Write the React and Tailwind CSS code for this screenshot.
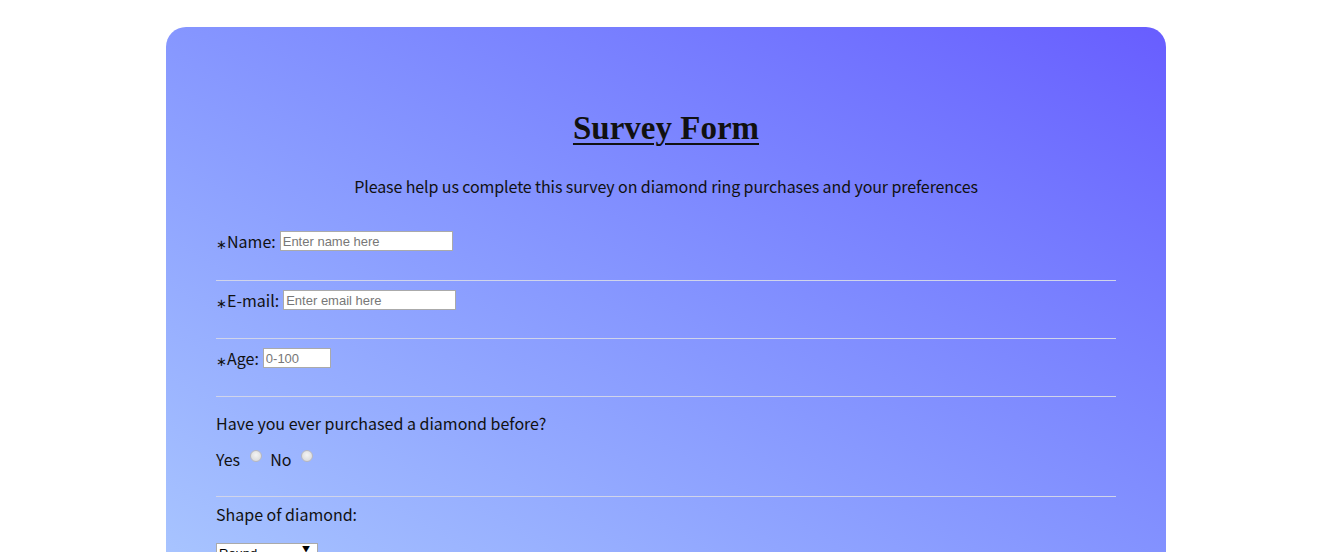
import React from 'react';

const Star = () => <span className="text-[13px] align-middle">∗</span>;

const Divider = () => <hr className="border-0 border-t border-[#d0d4ea] my-0" />;

const Radio = () => (
    <span className="block w-[12px] h-[12px] rounded-full bg-[radial-gradient(circle_at_50%_40%,#f4f4f4,#d4d4d4)] border border-[#b8b8c0] -translate-y-[3px]" />
);

export default function App() {
    return (
        <div className="min-h-screen bg-white pt-[27px] pb-10" style={{ fontFamily: '"Noto Sans CJK KR", "Noto Sans", sans-serif' }}>
            <div className="ml-[166px] w-[1000px] rounded-[20px] px-[50px] pt-[79px] pb-10 text-[16px] text-[#111] bg-gradient-to-tr from-[#abc8ff] to-[#685dff]">
                {/* Header */}
                <h1 className="text-center text-[33px] leading-[44px] font-bold underline underline-offset-[4px] decoration-2" style={{ fontFamily: '"Liberation Serif", serif' }}>
                    Survey Form
                </h1>
                <p className="mt-[26px] text-center leading-[20px] tracking-[-0.1px]">
                    Please help us complete this survey on diamond ring purchases and your preferences
                </p>

                {/* Name */}
                <div className="mt-[35px] flex items-center h-5 gap-[4px]">
                    <span><Star />Name:</span>
                    <input
                        type="text"
                        placeholder="Enter name here"
                        className="w-[173px] h-5 bg-white border border-[#aaa] px-[2px] text-[13px] placeholder:text-[#777]"
                        style={{ fontFamily: '"Liberation Sans", Arial, sans-serif' }}
                    />
                </div>
                <div className="mt-[29px] mb-[9px]"><Divider /></div>

                {/* Email */}
                <div className="flex items-center h-5 gap-[4px]">
                    <span><Star />E-mail:</span>
                    <input
                        type="email"
                        placeholder="Enter email here"
                        className="w-[173px] h-5 bg-white border border-[#aaa] px-[2px] text-[13px] placeholder:text-[#777]"
                        style={{ fontFamily: '"Liberation Sans", Arial, sans-serif' }}
                    />
                </div>
                <div className="mt-[28px] mb-[9px]"><Divider /></div>

                {/* Age */}
                <div className="flex items-center h-5 gap-[4px]">
                    <span><Star />Age:</span>
                    <input
                        type="number"
                        placeholder="0-100"
                        className="w-[68px] h-5 bg-white border border-[#aaa] px-[2px] text-[13px] placeholder:text-[#777]"
                        style={{ fontFamily: '"Liberation Sans", Arial, sans-serif' }}
                    />
                </div>
                <div className="mt-[28px]"><Divider /></div>

                {/* Purchased before */}
                <p className="mt-[16px] leading-[20px]">Have you ever purchased a diamond before?</p>
                <div className="mt-[16px] flex items-center h-5">
                    <span>Yes</span>
                    <span className="ml-[10px]"><Radio /></span>
                    <span className="ml-[8px]">No</span>
                    <span className="ml-[10px]"><Radio /></span>
                </div>
                <div className="mt-[27px]"><Divider /></div>

                {/* Shape */}
                <p className="mt-[7px] leading-[20px]">Shape of diamond:</p>
                <div className="mt-[15px] relative w-[102px]">
                    <select
                        className="appearance-none w-[102px] h-[20px] bg-white border border-[#aaa] text-[13px] pl-[2px] text-black"
                        style={{ fontFamily: '"Liberation Sans", Arial, sans-serif' }}
                        defaultValue="Round"
                    >
                        <option>Round</option>
                        <option>Princess</option>
                        <option>Oval</option>
                    </select>
                    <span className="absolute right-[8px] top-[6px] text-[8px] leading-none pointer-events-none text-black">▼</span>
                </div>
            </div>
        </div>
    );
}
